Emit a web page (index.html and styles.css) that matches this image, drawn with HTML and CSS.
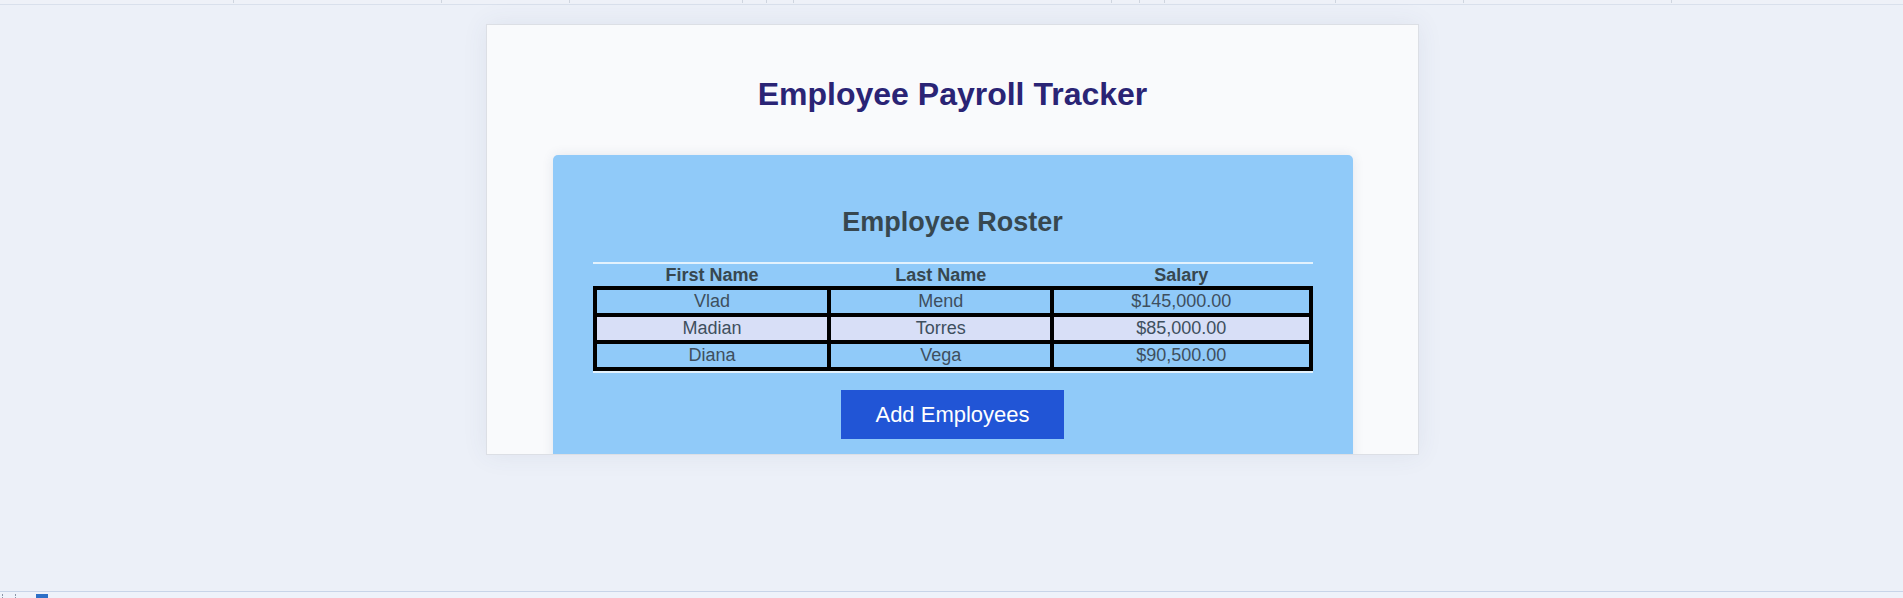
FILE: index.html
```html
<!DOCTYPE html>
<html>

<head>
  <link rel="stylesheet" href="styles.css">
  <title>Employee Payroll Tracker</title>
</head>
<body>
  <div class="top-strip">
    <span class="tick w234"></span>
    <span class="tick w208"></span>
    <span class="tick w128"></span>
    <span class="tick w173"></span>
    <span class="tick w24"></span>
    <span class="tick w27"></span>
    <span class="tick w318"></span>
    <span class="tick w28"></span>
    <span class="tick w25"></span>
    <span class="tick w171"></span>
    <span class="tick w128"></span>
    <span class="tick w208"></span>
  </div>

  <div class="page">
    <div class="card">
      <h1>Employee Payroll Tracker</h1>

      <div class="roster">
        <h2>Employee Roster</h2>
        <div class="table-wrap">
          <table id="employee-table">
            <thead>
              <tr>
                <th class="col-first">First Name</th>
                <th class="col-last">Last Name</th>
                <th class="col-salary">Salary</th>
              </tr>
            </thead>
            <tbody>
              <tr>
                <td>Vlad</td>
                <td>Mend</td>
                <td>$145,000.00</td>
              </tr>
              <tr>
                <td>Madian</td>
                <td>Torres</td>
                <td>$85,000.00</td>
              </tr>
              <tr>
                <td>Diana</td>
                <td>Vega</td>
                <td>$90,500.00</td>
              </tr>
            </tbody>
          </table>
        </div>
        <div class="buttons">
          <button id="add-employees">Add Employees</button>
        </div>
      </div>
    </div>
  </div>

  <div class="bottom-strip">
    <span class="grip"></span>
    <span class="app-icon"></span>
  </div>
</body>

</html>
```

FILE: styles.css
```css
body {
  margin: 0;
  min-height: 100vh;
  display: flex;
  flex-direction: column;
  font-family: "Liberation Sans", Arial, sans-serif;
  background-color: #ecf0f8;
  /* Light blue-grey background */
}

.top-strip {
  display: flex;
  height: 4px;
  background-color: #eef1f8;
  border-bottom: 1px solid #d9e0ec;
}

.tick {
  height: 3px;
  border-right: 1px solid #cfd5df;
}

.w234 { width: 233px; }
.w208 { width: 207px; }
.w128 { width: 127px; }
.w173 { width: 172px; }
.w24 { width: 23px; }
.w27 { width: 26px; }
.w318 { width: 317px; }
.w28 { width: 27px; }
.w25 { width: 24px; }
.w171 { width: 170px; }

.page {
  padding-left: 2px;
}

.card {
  width: 931px;
  height: 378px;
  margin: 19px auto 0;
  padding-top: 51px;
  background-color: #f9fafc;
  border: 1px solid #dcdfe5;
  box-shadow: 0 0 24px rgba(60, 80, 120, 0.08);
  overflow: hidden;
}

h1 {
  margin: 0;
  font-size: 32px;
  line-height: 37px;
  text-align: center;
  color: #2a2475;
}

.roster {
  width: 800px;
  margin: 42px auto 0;
  padding: 52px 0 40px;
  background-color: #90caf9;
  border-radius: 5px 5px 0 0;
  box-shadow: 0 0 12px rgba(40, 60, 100, 0.1);
}

h2 {
  margin: 0;
  font-size: 27px;
  line-height: 31px;
  text-align: center;
  color: #37474f;
}

.table-wrap {
  width: 720px;
  margin: 24px auto 0;
  border-top: 2px solid #e3f2fd;
  border-bottom: 2px solid #e3f2fd;
}

table {
  width: 100%;
  border-collapse: collapse;
  font-size: 18px;
  text-align: center;
}

th {
  padding: 0;
  line-height: 22px;
  color: #37474f;
}

.col-first { width: 32.8%; }
.col-last { width: 31.1%; }
.col-salary { width: 36.1%; }

td {
  padding: 1px 0;
  line-height: 21px;
  color: #3e4f5e;
  border: 4px solid #000;
}

tbody tr:nth-child(even) td {
  background-color: #d8dff7;
}

.buttons {
  display: flex;
  justify-content: center;
  margin-top: 17px;
}

button {
  background-color: #2155d6;
  color: #fff;
  font-family: "Liberation Sans", Arial, sans-serif;
  font-size: 22px;
  line-height: 25px;
  padding: 12px 34px;
  border: none;
  cursor: pointer;
}

.bottom-strip {
  display: flex;
  align-items: flex-end;
  gap: 20px;
  height: 6px;
  margin-top: auto;
  padding-left: 2px;
  border-top: 1px solid #c8d4e8;
  background-color: #eef2fa;
}

.grip {
  width: 12px;
  height: 4px;
  border-left: 1px dotted #8a94a6;
  border-right: 1px dotted #8a94a6;
}

.app-icon {
  width: 12px;
  height: 4px;
  background-color: #2c6fc7;
}
```
